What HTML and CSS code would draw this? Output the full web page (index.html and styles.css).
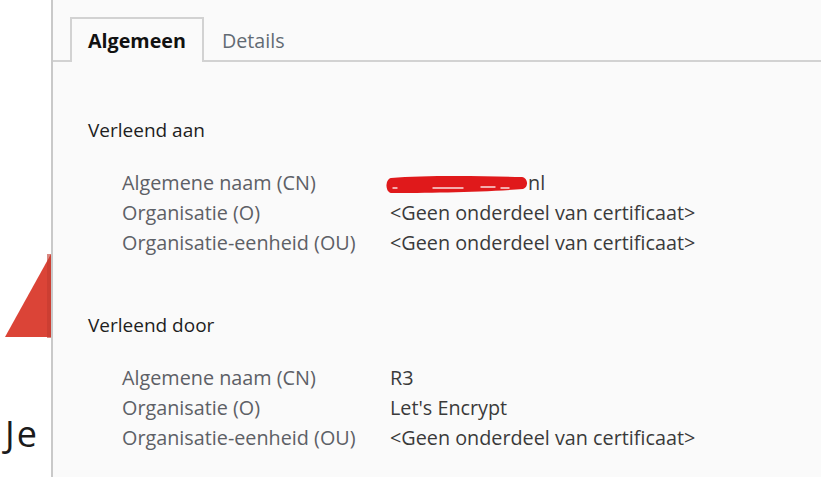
FILE: index.html
```html
<!DOCTYPE html>
<html lang="nl">
<head>
<meta charset="utf-8">
<title>Certificaat</title>
<link rel="stylesheet" href="styles.css">
</head>
<body>
<div class="page">
  <div class="behind">
    <svg class="warn" width="51" height="84" viewBox="0 0 51 84">
      <polygon points="5,83 51,0 51,83" fill="#db4437"/>
      <rect x="47" y="0" width="4" height="84" fill="#c23a2f" opacity="0.6"/>
    </svg>
    <div class="je">Je</div>
  </div>
  <div class="dialog">
    <div class="tabs">
      <div class="tab active">Algemeen</div>
      <div class="tab">Details</div>
    </div>
    <div class="content">
      <div class="heading">Verleend aan</div>
      <div class="fields">
        <div class="label">Algemene naam (CN)</div>
        <div class="value"><svg class="redact" width="145" height="24" viewBox="0 0 145 24">
          <path d="M6 7 C 40 4, 100 5, 137 6 C 143 7, 144 16, 138 18 C 100 21, 40 22, 6 22 C 0 21, 0 8, 6 7 Z" fill="#e0191b"/>
          <path d="M8 17 h4 M48 17 h30 M96 16 h14 M116 17 h8" stroke="#fff" stroke-width="1.4" stroke-linecap="round" opacity="0.85"/>
        </svg>nl</div>
        <div class="label">Organisatie (O)</div>
        <div class="value">&lt;Geen onderdeel van certificaat&gt;</div>
        <div class="label">Organisatie-eenheid (OU)</div>
        <div class="value">&lt;Geen onderdeel van certificaat&gt;</div>
      </div>
      <div class="heading second">Verleend door</div>
      <div class="fields">
        <div class="label">Algemene naam (CN)</div>
        <div class="value">R3</div>
        <div class="label">Organisatie (O)</div>
        <div class="value">Let's Encrypt</div>
        <div class="label">Organisatie-eenheid (OU)</div>
        <div class="value">&lt;Geen onderdeel van certificaat&gt;</div>
      </div>
    </div>
  </div>
</div>
</body>
</html>
```

FILE: styles.css
```css
html, body {
  margin: 0;
  padding: 0;
  background: #ffffff;
}

.page {
  display: flex;
  width: 821px;
  height: 477px;
  overflow: hidden;
}

.behind {
  width: 51px;
  flex: none;
  display: flex;
  flex-direction: column;
  background: #ffffff;
}

.warn {
  display: block;
  margin-top: 254px;
}

.je {
  margin-top: 78px;
  padding-left: 5px;
  font-family: "Open Sans", "Noto Sans", sans-serif;
  font-size: 36px;
  letter-spacing: 2px;
  line-height: 1;
  color: #1b1b1b;
  white-space: nowrap;
}

.dialog {
  flex: 1;
  background: #fafafa;
  border-left: 2px solid #c9c9c9;
  padding-top: 17px;
  font-family: "Open Sans", "Noto Sans", sans-serif;
  font-size: 19px;
}

.tabs {
  display: flex;
  padding-left: 17px;
  border-bottom: 2px solid #d2d2d2;
}

.tab {
  height: 43px;
  line-height: 43px;
  padding: 0 16px;
  border: 2px solid transparent;
  border-bottom: none;
  margin-bottom: -2px;
  font-size: 19.7px;
  color: #626a73;
}

.tab.active {
  border-color: #d2d2d2;
  background: #fafafa;
  font-weight: 700;
  color: #111111;
}

.content {
  padding-left: 35px;
}

.heading {
  margin-top: 53px;
  line-height: 30px;
  color: #1e1e1e;
}

.heading.second {
  margin-top: 52px;
}

.fields {
  display: grid;
  grid-template-columns: 268px auto;
  margin-top: 23px;
  padding-left: 34px;
  line-height: 30px;
  font-size: 19.8px;
}

.label {
  color: #5d6066;
}

.value {
  color: #3a3a3a;
  display: flex;
  align-items: center;
}

.redact {
  display: block;
  margin-left: -5px;
  margin-right: -2px;
}
```
